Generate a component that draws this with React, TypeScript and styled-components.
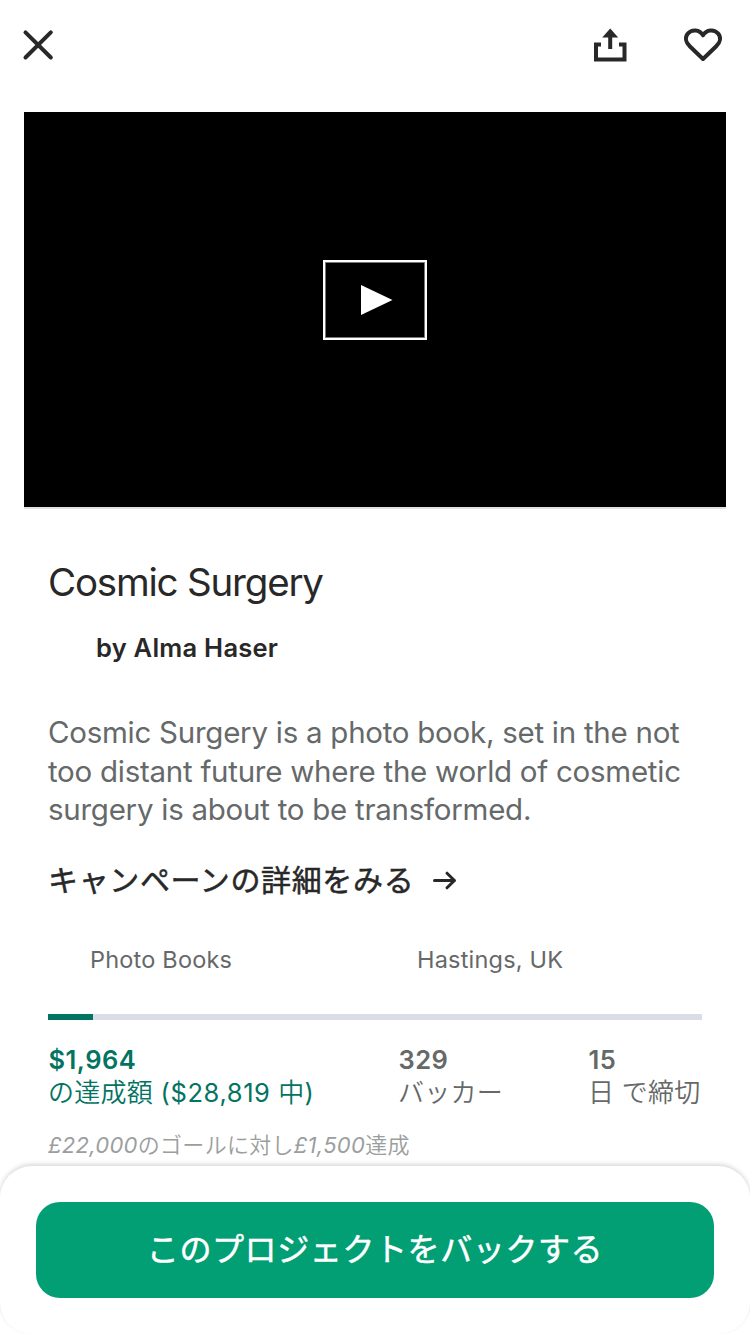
import React from "react";
import styled, { createGlobalStyle } from "styled-components";

const GlobalStyle = createGlobalStyle`
  *, *::before, *::after { box-sizing: border-box; }
  body {
    margin: 0;
    background: #fff;
    color: #282828;
    font-family: Inter, "Noto Sans CJK JP", sans-serif;
    -webkit-font-smoothing: antialiased;
  }
  h1, p { margin: 0; }
  button { border: 0; padding: 0; background: none; color: inherit; font: inherit; }
`;

const Screen = styled.main`
  position: relative;
  width: 750px;
  height: 1334px;
  overflow: hidden;
  background: #fff;
`;

const TopBar = styled.header`
  display: flex;
  align-items: center;
  justify-content: space-between;
  height: 112px;
  padding: 0 27px 22px 18px;
`;

const Actions = styled.div`
  display: flex;
  gap: 53px;
`;

const IconButton = styled.button`
  display: flex;
  width: 40px;
  height: 40px;
  svg { display: block; }
`;

const Video = styled.section`
  display: flex;
  align-items: center;
  justify-content: center;
  height: 397px;
  margin: 0 24px;
  background: #000;
  border-bottom: 2px solid #e2e2e2;
`;

const PlayButton = styled.button`
  display: flex;
  align-items: center;
  justify-content: center;
  width: 104px;
  height: 80px;
  margin-top: -19px;
  border: 2px solid #fff;
  box-shadow: inset 0 0 0 1px #777;
`;

const Content = styled.section`
  display: flex;
  flex-direction: column;
  padding: 49px 48px 0;
`;

const Title = styled.h1`
  font-size: 38.5px;
  font-weight: 400;
  line-height: 48px;
  letter-spacing: -1.2px;
`;

const Creator = styled.p`
  margin-top: 26px;
  padding-left: 48px;
  font-size: 25.5px;
  font-weight: 600;
  line-height: 32px;
  letter-spacing: 0.25px;
`;

const Blurb = styled.p`
  margin-top: 49px;
  color: #656969;
  font-size: 29.5px;
  line-height: 38.5px;
  letter-spacing: -0.26px;
  white-space: nowrap;
`;

const CampaignLink = styled.button`
  display: flex;
  align-items: center;
  gap: 16.5px;
  height: 40px;
  margin-top: 31px;
  font-size: 30px;
  font-weight: 400;
  line-height: 40px;
  letter-spacing: 0.65px;
  -webkit-text-stroke: 0.5px currentColor;
`;

const Tags = styled.div`
  display: grid;
  grid-template-columns: 327px 1fr;
  margin-top: 43px;
`;

const Tag = styled.span`
  padding-left: 42px;
  color: #656969;
  font-size: 23.5px;
  line-height: 34px;
  letter-spacing: 0.2px;
`;

const Track = styled.div`
  height: 6px;
  margin-top: 37px;
  background: #dadce6;
`;

const Progress = styled.div<{ $percent: number }>`
  width: ${(p) => p.$percent}%;
  height: 100%;
  background: #037362;
`;

const Stats = styled.div`
  display: grid;
  grid-template-columns: 350px 190px 1fr;
  margin-top: 24px;
`;

const Stat = styled.div<{ $accent?: boolean }>`
  color: ${(p) => (p.$accent ? "#037362" : "#656969")};
  font-size: 26px;
  line-height: 32px;
  white-space: nowrap;
`;

const StatValue = styled.div`
  padding-left: 0.5px;
  font-size: 25.5px;
  font-weight: 600;
  letter-spacing: 0.5px;
`;

const StatLabel = styled.div`
  font-weight: 350;
  line-height: 33px;
  letter-spacing: 0.25px;
`;

const Latin = styled.span`
  font-size: 25.5px;
  font-weight: 400;
  letter-spacing: 0.6px;
`;

const Goal = styled.p`
  margin-top: 20px;
  color: #9b9e9e;
  font-size: 22px;
  font-weight: 350;
  line-height: 32px;
  letter-spacing: 0.3px;
  em { font-weight: 400; }
`;

const BottomSheet = styled.footer`
  position: absolute;
  left: 0;
  bottom: 0;
  width: 100%;
  height: 168px;
  padding: 36px;
  border-radius: 32px;
  background: #fff;
  box-shadow: 0 -2px 4px rgba(0, 0, 0, 0.15);
`;

const PledgeButton = styled.button`
  display: flex;
  align-items: center;
  justify-content: center;
  width: 100%;
  height: 96px;
  padding-bottom: 6px;
  border-radius: 24px;
  background: #029e74;
  color: #fff;
  font-size: 32px;
  font-weight: 400;
  letter-spacing: 0.6px;
  -webkit-text-stroke: 0.5px currentColor;
`;

export default function App() {
  return (
    <>
      <GlobalStyle />
      <Screen>
        <TopBar>
          <IconButton aria-label="閉じる">
            <svg width="40" height="40" fill="none" stroke="#282828" strokeWidth="4" strokeLinecap="round">
              <path d="M7.5 7.3 32.8 32.5M32.8 7.3 7.5 32.5" />
            </svg>
          </IconButton>
          <Actions>
            <IconButton aria-label="共有">
              <svg width="40" height="40" fill="none" stroke="#282828" strokeWidth="4">
                <path d="M11 19.5H6V34.5H34.5V19.5H29M20.2 10V24" />
                <path d="M20.2 3.5 28.2 12.5H12.2Z" fill="#282828" stroke="none" />
              </svg>
            </IconButton>
            <IconButton aria-label="保存">
              <svg width="40" height="40" fill="none" stroke="#282828" strokeWidth="4" strokeLinejoin="round">
                <path d="M20 34 7 21.5C2.6 17.2 1.7 12.2 4.8 8.6 8.8 4 16.5 4.3 20 10.3 23.5 4.3 31.2 4 35.2 8.6 38.3 12.2 37.4 17.2 33 21.5Z" />
              </svg>
            </IconButton>
          </Actions>
        </TopBar>
        <Video>
          <PlayButton aria-label="再生">
            <svg width="36" height="32" fill="#fff">
              <path d="M4 1 35.5 16 4 31Z" />
            </svg>
          </PlayButton>
        </Video>
        <Content>
          <Title>Cosmic Surgery</Title>
          <Creator>by Alma Haser</Creator>
          <Blurb>
            Cosmic Surgery is a photo book, set in the not
            <br />
            too distant future where the world of cosmetic
            <br />
            surgery is about to be transformed.
          </Blurb>
          <CampaignLink>
            キャンペーンの詳細をみる
            <svg width="26" height="20" fill="none" stroke="#282828" strokeWidth="3" strokeLinecap="round" strokeLinejoin="round">
              <path d="M3.5 10.5H23.5M16 3.2 23.5 10.5 16 17.8" />
            </svg>
          </CampaignLink>
          <Tags>
            <Tag>Photo Books</Tag>
            <Tag>Hastings, UK</Tag>
          </Tags>
          <Track>
            <Progress $percent={6.85} />
          </Track>
          <Stats>
            <Stat $accent>
              <StatValue>$1,964</StatValue>
              <StatLabel>
                の達成額 <Latin>($28,819 </Latin>中<Latin>)</Latin>
              </StatLabel>
            </Stat>
            <Stat>
              <StatValue>329</StatValue>
              <StatLabel>バッカー</StatLabel>
            </Stat>
            <Stat>
              <StatValue>15</StatValue>
              <StatLabel>日 で締切</StatLabel>
            </Stat>
          </Stats>
          <Goal>
            <em>£22,000</em>のゴールに対し<em>£1,500</em>達成
          </Goal>
        </Content>
        <BottomSheet>
          <PledgeButton>このプロジェクトをバックする</PledgeButton>
        </BottomSheet>
      </Screen>
    </>
  );
}
